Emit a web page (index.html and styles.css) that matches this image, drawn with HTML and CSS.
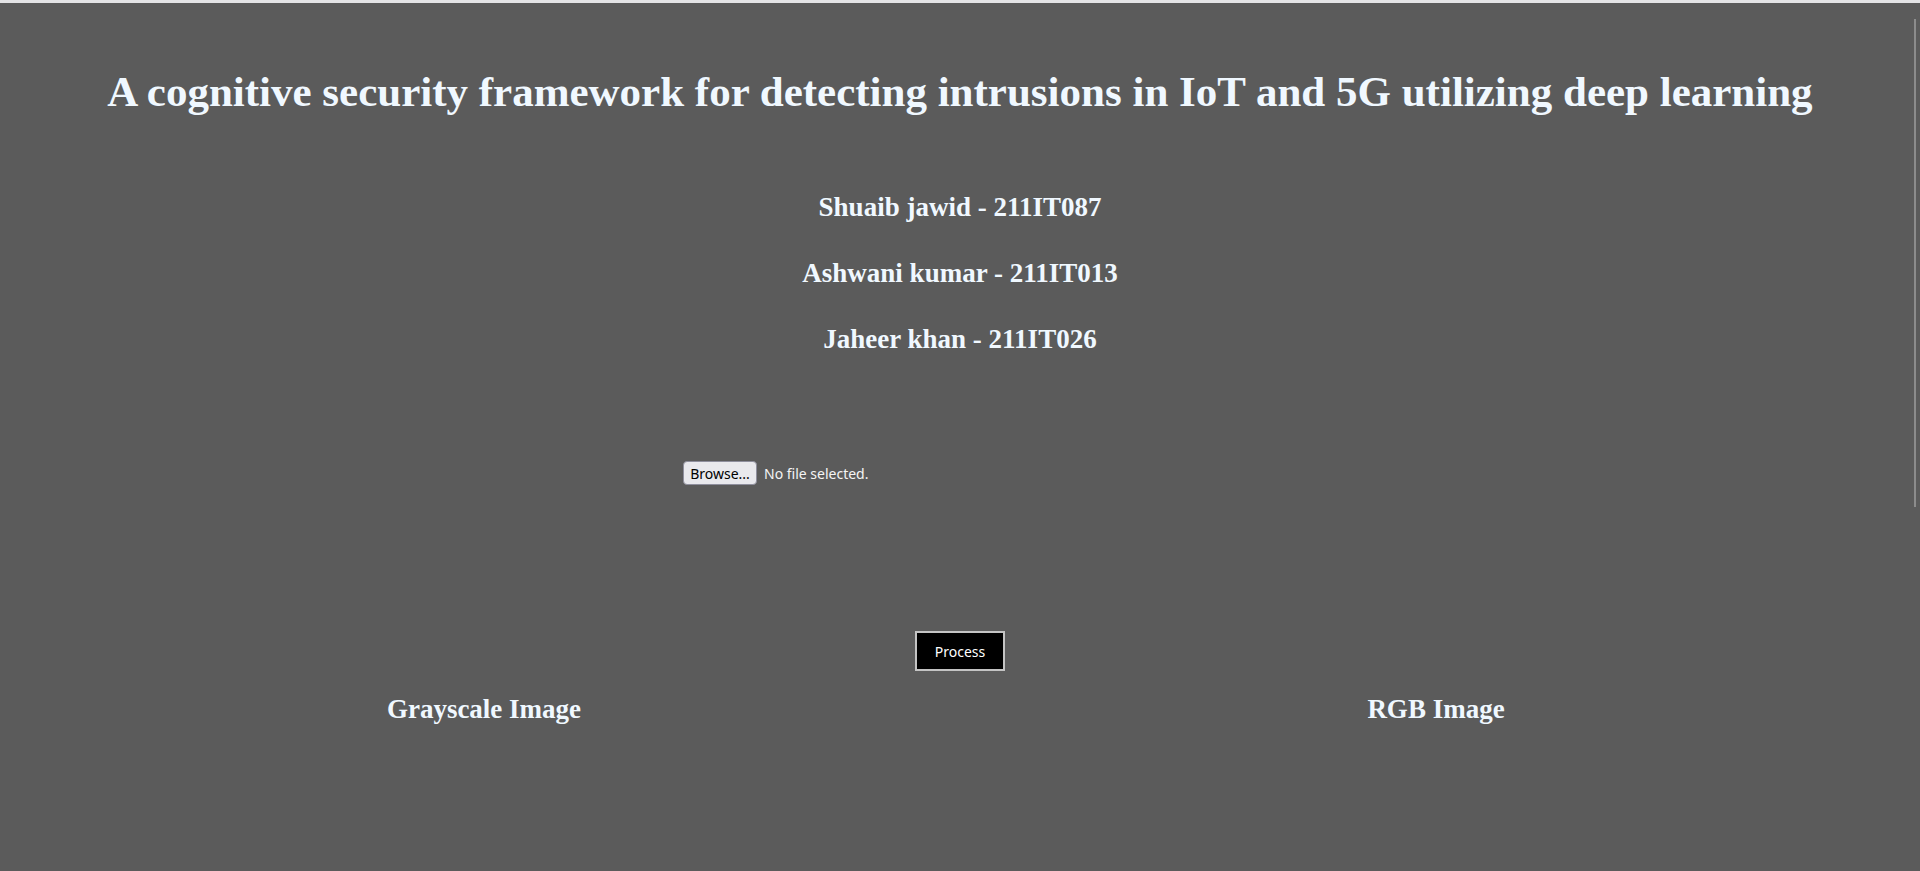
FILE: index.html
```html
<!DOCTYPE html>
<html lang="en">
<head>
<meta charset="utf-8">
<title>Cognitive security framework</title>
<link rel="stylesheet" href="styles.css">
</head>
<body>
<div class="topline"></div>
<main class="page">
  <h1 class="title">A cognitive security framework for detecting intrusions in IoT and 5G utilizing deep learning</h1>
  <section class="authors">
    <h2 class="author">Shuaib jawid - 211IT087</h2>
    <h2 class="author">Ashwani kumar - 211IT013</h2>
    <h2 class="author">Jaheer khan - 211IT026</h2>
  </section>
  <form class="upload">
    <div class="file-row">
      <label class="file-btn">Browse...</label>
      <span class="file-name">No file selected.</span>
    </div>
    <div class="process-row">
      <button type="button" class="process-btn">Process</button>
    </div>
  </form>
  <section class="results">
    <div class="result"><h2 class="result-title">Grayscale Image</h2></div>
    <div class="result"><h2 class="result-title">RGB Image</h2></div>
  </section>
</main>
<div class="scroll-thumb"></div>
</body>
</html>
```

FILE: styles.css
```css
html {
  background: #5b5b5b;
}
body {
  margin: 0;
  background: #5b5b5b;
  color: #f0f8ff;
  font-family: "Liberation Serif", "Times New Roman", serif;
  min-height: 871px;
}
.topline {
  height: 3px;
  background: #e4e4e6;
}
.page {
  padding: 0 8px;
}
.title {
  margin: 0;
  padding-top: 64px;
  font-size: 43px;
  line-height: 50px;
  font-weight: bold;
  text-align: center;
}
.authors {
  margin-top: 76px;
}
.author {
  margin: 0 0 38px;
  font-size: 27px;
  line-height: 28px;
  font-weight: bold;
  text-align: center;
}
.upload {
  margin-top: 108px;
}
.file-row {
  width: 554px;
  margin: 0 auto;
  display: flex;
  align-items: center;
  gap: 7px;
  font-family: "Noto Sans", "Liberation Sans", sans-serif;
  font-size: 14px;
}
.file-btn {
  box-sizing: border-box;
  width: 74px;
  height: 24px;
  display: flex;
  align-items: center;
  justify-content: center;
  background: #e9e9ed;
  color: #000;
  border: 1px solid #8f8f9d;
  border-radius: 4px;
}
.file-name {
  color: #f4f4f4;
}
.process-row {
  margin-top: 146px;
  display: flex;
  justify-content: center;
}
.process-btn {
  box-sizing: border-box;
  width: 90px;
  height: 40px;
  background: #000;
  color: #fff;
  border: 2px solid #c4c4c4;
  font-family: "Noto Sans", "Liberation Sans", sans-serif;
  font-size: 14px;
  padding: 0;
}
.results {
  display: flex;
  margin-top: 22px;
}
.result {
  flex: 1;
  text-align: center;
}
.result-title {
  margin: 0;
  font-size: 27px;
  line-height: 32px;
  font-weight: bold;
}
.scroll-thumb {
  position: fixed;
  top: 19px;
  right: 4px;
  width: 2px;
  height: 488px;
  background: #8c8c8c;
}
```
